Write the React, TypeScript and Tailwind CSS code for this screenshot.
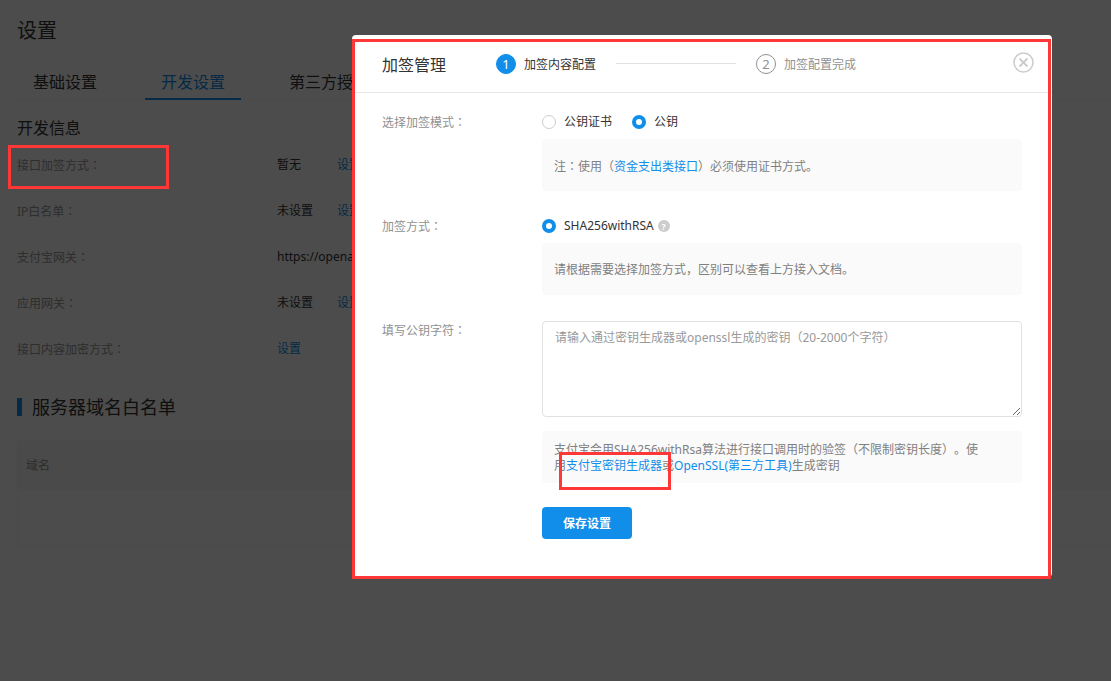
import { Fragment, useState } from 'react';
import type { ReactNode } from 'react';
import clsx from 'clsx';

const TABS = ['基础设置', '开发设置', '第三方授权'];

interface DevItem {
  label: string;
  value?: string;
  action?: string;
  marked?: boolean;
}

const DEV_ITEMS: DevItem[] = [
  { label: '接口加签方式：', value: '暂无', action: '设置', marked: true },
  { label: 'IP白名单：', value: '未设置', action: '设置' },
  { label: '支付宝网关：', value: 'https://openapi' },
  { label: '应用网关：', value: '未设置', action: '设置' },
  { label: '接口内容加密方式：', action: '设置' },
];

// Sets full-width colons in the middle of their cell
function Zh({ text }: { text: string }) {
  return text.split(/(：)/).map((part, i) =>
    i % 2 ? (
      <span key={i} className="font-['Noto_Sans_CJK_TC',sans-serif]" lang="zh-TW">{part}</span>
    ) : (
      <Fragment key={i}>{part}</Fragment>
    )
  );
}

// Red frame that points at a step of the guide
function Mark({ className }: { className: string }) {
  return <div className={clsx('pointer-events-none absolute z-20 border-3 border-[#ff3737]', className)} />;
}

function SettingsPage() {
  const [tab, setTab] = useState('开发设置');

  return (
    <main className="min-h-screen bg-white pt-[17px] pl-[17px] text-[#333]">
      <h1 className="text-xl leading-7">设置</h1>

      <nav className="mt-[19px] flex gap-8 border-b border-[#f3f3f3]">
        {TABS.map((name) => (
          <button
            key={name}
            onClick={() => setTab(name)}
            className={clsx(
              '-mb-px h-9 border-b-2 px-4 pt-[2px] text-base',
              tab === name ? 'border-[#108ee9] text-[#108ee9]' : 'border-transparent'
            )}
          >
            {name}
          </button>
        ))}
      </nav>

      <h2 className="mt-4 text-base leading-6">开发信息</h2>
      <dl className="mt-[2px]">
        {DEV_ITEMS.map((item) => (
          <div key={item.label} className="relative flex h-[46px] items-center text-xs">
            <dt className="w-[260px] text-[#999]"><Zh text={item.label} /></dt>
            <dd className="flex">
              {item.value && <span className="w-15 whitespace-nowrap">{item.value}</span>}
              {item.action && <a href="#" className="text-[#108ee9]">{item.action}</a>}
            </dd>
            {item.marked && <Mark className="top-[3px] -left-[9px] h-11 w-[161px]" />}
          </div>
        ))}
      </dl>

      <h2 className="mt-[26px] flex items-center gap-[10px] text-lg leading-[18px]">
        <span className="h-[18px] w-[5px] bg-[#108ee9]" />
        服务器域名白名单
      </h2>
      <table className="mt-[25px] w-full border border-r-0 border-[#f3f3f3] text-xs">
        <thead>
          <tr className="h-12 bg-[#f7f7f7]">
            <th className="px-2 text-left font-normal text-[#999]">域名</th>
          </tr>
        </thead>
        <tbody>
          <tr className="h-14">
            <td />
          </tr>
        </tbody>
      </table>
    </main>
  );
}

function Step({ index, title, active = false }: { index: number; title: string; active?: boolean }) {
  return (
    <div className={clsx('flex items-center gap-2 text-xs', active ? 'text-[#333]' : 'text-[#919191]')}>
      <span
        className={clsx(
          'flex size-5 items-center justify-center rounded-full border pt-px text-[13px] leading-none',
          active ? 'border-[#108ee9] bg-[#108ee9] text-white' : 'border-[#919191]'
        )}
      >
        {index}
      </span>
      <span className="pt-[2px]">{title}</span>
    </div>
  );
}

interface RadioProps {
  name: string;
  label: string;
  checked: boolean;
  onChange: () => void;
}

function Radio({ name, label, checked, onChange }: RadioProps) {
  return (
    <label className="flex items-center gap-2">
      <input
        type="radio"
        name={name}
        checked={checked}
        onChange={onChange}
        className="size-[14px] appearance-none rounded-full border border-[#ccc] bg-white checked:border-4 checked:border-[#108ee9]"
      />
      {label}
    </label>
  );
}

function Note({ children }: { children: ReactNode }) {
  return (
    <div className="relative flex min-h-13 items-center rounded bg-[#fafafa] pt-[2px] pr-9 pl-3 leading-4 text-[#808080]">
      {children}
    </div>
  );
}

function Row({ label, children }: { label: ReactNode; children: ReactNode }) {
  return (
    <div className="flex">
      <div className="w-40 shrink-0 text-[#919191]">{label}</div>
      <div className="flex-1">{children}</div>
    </div>
  );
}

function SignDialog() {
  const [mode, setMode] = useState('公钥');
  const [key, setKey] = useState('');

  return (
    <section role="dialog" aria-label="加签管理" className="relative w-[700px] rounded bg-white text-[#333]">
      <header className="flex h-[58px] items-center border-b border-[#e9e9e9] pr-[18px] pl-[30px]">
        <h2 className="w-[114px] pt-[2px] text-base">加签管理</h2>
        <Step index={1} title="加签内容配置" active />
        <span className="mx-5 h-px w-30 bg-[#e1e1e1]" />
        <Step index={2} title="加签配置完成" />
        <button aria-label="关闭" className="mb-[2px] ml-auto">
          <svg width="21" height="21" viewBox="0 0 21 21" fill="none" stroke="#ccc">
            <circle cx="10.5" cy="10.5" r="9.5" strokeWidth="1.6" />
            <path d="M6.5 6.5l8 8M14.5 6.5l-8 8" strokeWidth="1.9" />
          </svg>
        </button>
      </header>

      <form
        onSubmit={(e) => e.preventDefault()}
        className="flex flex-col gap-[26px] px-[30px] pt-5 pb-[38px] text-xs leading-[18px]"
      >
        <Row label={<Zh text="选择加签模式：" />}>
          <div className="mb-2 flex gap-5">
            {['公钥证书', '公钥'].map((name) => (
              <Radio key={name} name="mode" label={name} checked={mode === name} onChange={() => setMode(name)} />
            ))}
          </div>
          <Note>
            <p>
              <Zh text="注：使用（" />
              <a href="#" className="text-[#108ee9]">资金支出类接口</a>
              ）必须使用证书方式。
            </p>
          </Note>
        </Row>

        <Row label={<Zh text="加签方式：" />}>
          <div className="mb-2 flex items-center gap-1">
            <Radio name="algorithm" label="SHA256withRSA" checked onChange={() => {}} />
            <span className="flex size-3 items-center justify-center rounded-full bg-[#ccc] text-[9px] leading-none font-bold text-white">
              ?
            </span>
          </div>
          <Note>
            <p>请根据需要选择加签方式，区别可以查看上方接入文档。</p>
          </Note>
        </Row>

        <Row label={<label htmlFor="public-key"><Zh text="填写公钥字符：" /></label>}>
          <textarea
            id="public-key"
            value={key}
            onChange={(e) => setKey(e.target.value)}
            placeholder="请输入通过密钥生成器或openssl生成的密钥（20-2000个字符）"
            className="mb-[14px] block h-24 w-full rounded border border-[#e1e1e1] px-3 py-2 leading-4 placeholder:text-[#999]"
          />
          <Note>
            <p>
              支付宝会用SHA256withRsa算法进行接口调用时的验签（不限制密钥长度）。使用
              <a href="#" className="text-[#108ee9]">支付宝密钥生成器</a>或
              <a href="#" className="text-[#108ee9]">OpenSSL(第三方工具)</a>生成密钥
            </p>
            <Mark className="top-[21px] left-[17px] h-[38px] w-28" />
          </Note>
          <button type="submit" className="mt-6 h-8 w-[90px] rounded bg-[#108ee9] pt-[2px] font-bold text-white">
            保存设置
          </button>
        </Row>
      </form>

      <Mark className="top-1 right-px -bottom-[2px] left-0" />
    </section>
  );
}

export default function App() {
  return (
    <div className="overflow-hidden font-['Noto_Sans','Noto_Sans_CJK_SC',sans-serif] [text-spacing-trim:space-all]">
      <SettingsPage />
      <div className="fixed inset-0 z-10 flex items-start justify-end bg-black/70 pt-[35px] pr-[59px]">
        <SignDialog />
      </div>
    </div>
  );
}
